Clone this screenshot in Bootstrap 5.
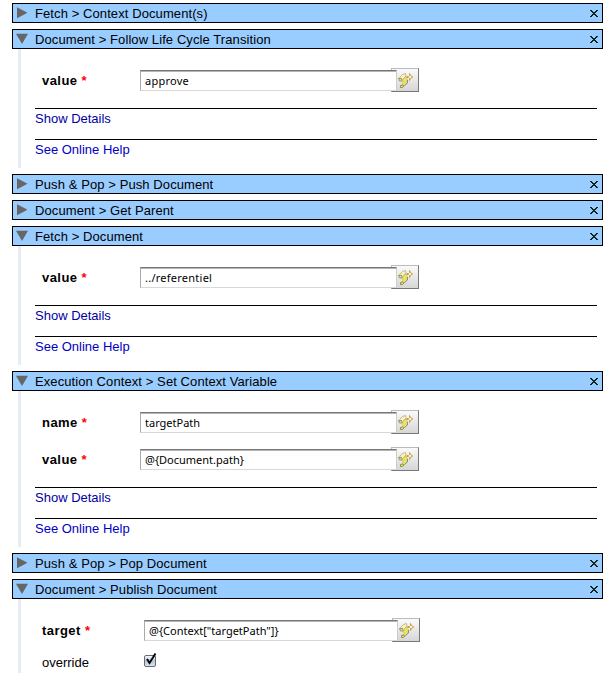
<!DOCTYPE html>
<html lang="en">
<head>
<meta charset="utf-8">
<meta name="viewport" content="width=device-width, initial-scale=1">
<title>Operation chain</title>
<link href="https://cdn.jsdelivr.net/npm/bootstrap@5.3.0/dist/css/bootstrap.min.css" rel="stylesheet">
<style>
body{font:13px/18px "Liberation Sans",Arial,sans-serif;color:#000;background:#fff;overflow:hidden}
.chain{padding:3px 10px 0 12px;height:673px;overflow:hidden}
.op{margin-bottom:6px}
.op-bar{height:20px;border:1px solid #000;background:#9cf;padding:0 4px 0 3px}
.op-bar svg{flex:none}
.op-bar span{letter-spacing:.09px;padding-top:1px}
.op-bar .tri{margin-right:7px}
.op-bar .shut{margin-top:2px}
.op-body{margin-left:6px;border-left:3px solid #e6ecf7;padding:13px 6px 0 14px}
.field{height:37px;padding-left:7px}
.field.short{height:26px}
.field label{width:98px;line-height:37px;font-weight:700;letter-spacing:.45px}
.wide .field label{width:102px}
.field.short label{line-height:28px;font-weight:400;letter-spacing:0}
.req{color:#f00}
.entry{width:257px;height:21px;margin-top:8px;border:1px solid #ccc;border-top-color:#777;border-left-color:#aaa;border-bottom-color:#d8d8d8;border-radius:0;box-shadow:inset 0 1px #b4b4b4;padding:0 4px 1px;font:11px/16px "Noto Sans","Open Sans",sans-serif;color:#000;background:#fff;position:relative;z-index:1}
.airy{letter-spacing:.25px}
.wide .entry{width:254px}
.pick{width:28px;height:24px;margin:6px 0 0 -6px;border:1px solid #bbb;border-right:1px solid #777;border-bottom:1px solid #777;border-radius:0;background:linear-gradient(#fafafa,#d6d6d6);padding:2px 0 0 6px;line-height:0;text-align:left}
.info{border-top:1px solid #000;height:31px;padding-top:1px}
.info a{color:#0000a4;text-decoration:none}
.info + .info a{color:#0000c4}
.infos{margin-top:9px;height:60px}
.tick{margin-top:1px}
</style>
<script src="https://cdn.jsdelivr.net/npm/bootstrap@5.3.0/dist/js/bootstrap.bundle.min.js"></script>
</head>
<body>
<svg class="d-none">
<symbol id="closed" viewBox="0 0 12 12"><path d="M1 .3 11.500 5.800 1 11.300z" fill="#666"/></symbol>
<symbol id="opened" viewBox="0 0 12 12"><path d="M0 .8h12L6 11z" fill="#666"/></symbol>
<symbol id="close" viewBox="0 0 8 8"><path d="M0 .500h2M6 .500h2M1 1.500h2M5 1.500h2M2 2.500h4M3 3.500h2M2 4.500h4M1 5.500h2M5 5.500h2M0 6.500h2M6 6.500h2" stroke="#142420" shape-rendering="crispEdges"/></symbol>
<symbol id="scroll" viewBox="0 0 16 16">
<path d="M4.500 1.500 7.500.5 8 3 4.500 6.500 1 6 2 4z" fill="#f6f0c4" stroke="#b5ad7c" stroke-width=".8"/>
<path d="M.5 5.500 3.500 5.500 4.500 8 1.500 8z" fill="#e2d794" stroke="#91854c" stroke-width=".8"/>
<path d="M4.500 6.500 8 4 9.500 6 9 10 6 13 3.500 12.500 5 10.500z" fill="#e9e45c" stroke="#c3bd69" stroke-width=".7"/>
<path d="M9.500 7V10L6.500 12.500" fill="none" stroke="#7a849a" stroke-width=".9"/>
<path d="M2.500 12.500 4.500 12 6 13 4.500 14.500H2.500z" fill="#eee321" stroke="#6c6e5b" stroke-width=".7"/>
<path d="M11.500.500V2.500L10.500 3.500H8.500M8.500 4.500H10.500L11.500 5.500V7.500M11.500.500 12.500 2.500 14.700 4 12.500 5.300 11.500 7.500" fill="#fffbea" stroke="#c4912f" stroke-width=".9"/>
</symbol>
</svg>
<main class="chain">
<section class="op"><header class="op-bar d-flex align-items-center"><svg class="tri" width="12" height="12"><use href="#closed"/></svg><span class="flex-grow-1">Fetch &gt; Context Document(s)</span><svg class="shut" width="8" height="8"><use href="#close"/></svg></header></section>

<section class="op"><header class="op-bar d-flex align-items-center"><svg class="tri" width="12" height="12"><use href="#opened"/></svg><span class="flex-grow-1">Document &gt; Follow Life Cycle Transition</span><svg class="shut" width="8" height="8"><use href="#close"/></svg></header>
<div class="op-body">
<div class="field d-flex align-items-start"><label for="f1">value <span class="req">*</span></label><input id="f1" class="entry airy" value="approve"><button class="pick" aria-label="Insert"><svg width="16" height="16"><use href="#scroll"/></svg></button></div>
<div class="infos"><div class="info"><a href="#">Show Details</a></div><div class="info"><a href="#">See Online Help</a></div></div>
</div></section>

<section class="op"><header class="op-bar d-flex align-items-center"><svg class="tri" width="12" height="12"><use href="#closed"/></svg><span class="flex-grow-1">Push &amp; Pop &gt; Push Document</span><svg class="shut" width="8" height="8"><use href="#close"/></svg></header></section>

<section class="op"><header class="op-bar d-flex align-items-center"><svg class="tri" width="12" height="12"><use href="#closed"/></svg><span class="flex-grow-1">Document &gt; Get Parent</span><svg class="shut" width="8" height="8"><use href="#close"/></svg></header></section>

<section class="op"><header class="op-bar d-flex align-items-center"><svg class="tri" width="12" height="12"><use href="#opened"/></svg><span class="flex-grow-1">Fetch &gt; Document</span><svg class="shut" width="8" height="8"><use href="#close"/></svg></header>
<div class="op-body">
<div class="field d-flex align-items-start"><label for="f2">value <span class="req">*</span></label><input id="f2" class="entry airy" value="../referentiel"><button class="pick" aria-label="Insert"><svg width="16" height="16"><use href="#scroll"/></svg></button></div>
<div class="infos"><div class="info"><a href="#">Show Details</a></div><div class="info"><a href="#">See Online Help</a></div></div>
</div></section>

<section class="op"><header class="op-bar d-flex align-items-center"><svg class="tri" width="12" height="12"><use href="#opened"/></svg><span class="flex-grow-1">Execution Context &gt; Set Context Variable</span><svg class="shut" width="8" height="8"><use href="#close"/></svg></header>
<div class="op-body">
<div class="field d-flex align-items-start"><label for="f3">name <span class="req">*</span></label><input id="f3" class="entry" value="targetPath"><button class="pick" aria-label="Insert"><svg width="16" height="16"><use href="#scroll"/></svg></button></div>
<div class="field d-flex align-items-start"><label for="f4">value <span class="req">*</span></label><input id="f4" class="entry" value="@{Document.path}"><button class="pick" aria-label="Insert"><svg width="16" height="16"><use href="#scroll"/></svg></button></div>
<div class="infos"><div class="info"><a href="#">Show Details</a></div><div class="info"><a href="#">See Online Help</a></div></div>
</div></section>

<section class="op"><header class="op-bar d-flex align-items-center"><svg class="tri" width="12" height="12"><use href="#closed"/></svg><span class="flex-grow-1">Push &amp; Pop &gt; Pop Document</span><svg class="shut" width="8" height="8"><use href="#close"/></svg></header></section>

<section class="op"><header class="op-bar d-flex align-items-center"><svg class="tri" width="12" height="12"><use href="#opened"/></svg><span class="flex-grow-1">Document &gt; Publish Document</span><svg class="shut" width="8" height="8"><use href="#close"/></svg></header>
<div class="op-body wide">
<div class="field d-flex align-items-start"><label for="f5">target <span class="req">*</span></label><input id="f5" class="entry" value="@{Context[&quot;targetPath&quot;]}"><button class="pick" aria-label="Insert"><svg width="16" height="16"><use href="#scroll"/></svg></button></div>
<div class="field short d-flex align-items-start"><label>override</label>
<svg class="tick" role="img" aria-label="checked" width="14" height="18" viewBox="0 0 14 18"><defs><linearGradient id="g" x2="0" y2="1"><stop stop-color="#fff"/><stop offset=".5" stop-color="#b4c4d9"/><stop offset="1" stop-color="#dbe8f5"/></linearGradient></defs><rect x=".5" y="5.500" width="11" height="11" rx="1.500" fill="url(#g)" stroke="#666b75"/><path d="M3 9 5.500 13 11.500 3.500" fill="none" stroke="#000" stroke-width="1.900"/></svg></div>
<div class="infos"></div>
</div></section>
</main>
</body>
</html>
